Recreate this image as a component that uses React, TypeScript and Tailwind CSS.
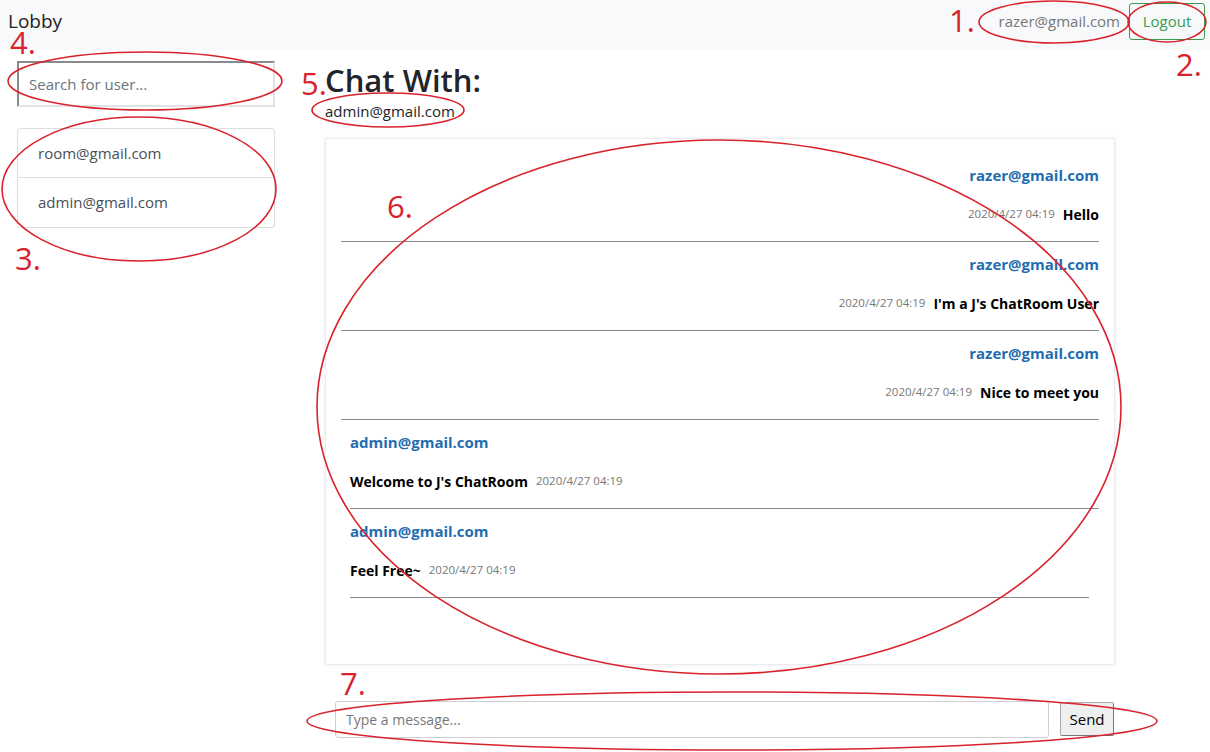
import React from "react";

type Message = {
  id: number;
  from: string;
  text: string;
  time: string;
  mine: boolean;
};

const messages: Message[] = [
  { id: 1, from: "razer@gmail.com", text: "Hello", time: "2020/4/27 04:19", mine: true },
  { id: 2, from: "razer@gmail.com", text: "I'm a J's ChatRoom User", time: "2020/4/27 04:19", mine: true },
  { id: 3, from: "razer@gmail.com", text: "Nice to meet you", time: "2020/4/27 04:19", mine: true },
  { id: 4, from: "admin@gmail.com", text: "Welcome to J's ChatRoom", time: "2020/4/27 04:19", mine: false },
  { id: 5, from: "admin@gmail.com", text: "Feel Free~", time: "2020/4/27 04:19", mine: false },
];

const users = ["room@gmail.com", "admin@gmail.com"];

// red pen marks drawn over the screenshot
const Annotations = () => {
  const red = "#d9222b";
  const marks = [
    { n: "1.", x: 949, y: 32 },
    { n: "2.", x: 1176, y: 76 },
    { n: "3.", x: 15, y: 270 },
    { n: "4.", x: 10, y: 54 },
    { n: "5.", x: 301, y: 95 },
    { n: "6.", x: 387, y: 218 },
    { n: "7.", x: 340, y: 695 },
  ];
  const rings = [
    { cx: 1054, cy: 22, rx: 75, ry: 21 },
    { cx: 1167, cy: 22, rx: 39, ry: 20 },
    { cx: 145, cy: 81, rx: 137, ry: 29 },
    { cx: 388, cy: 110, rx: 76, ry: 17 },
    { cx: 139, cy: 189, rx: 137, ry: 72 },
    { cx: 719, cy: 407, rx: 402, ry: 267 },
    { cx: 732, cy: 721, rx: 425, ry: 29 },
  ];
  return (
    <svg
      className="pointer-events-none absolute left-0 top-0"
      width={1210}
      height={752}
      viewBox="0 0 1210 752"
    >
      {rings.map((r, i) => (
        <ellipse key={i} {...r} fill="none" stroke={red} strokeWidth={1.6} />
      ))}
      {marks.map((m) => (
        <text
          key={m.n}
          x={m.x}
          y={m.y}
          fill={red}
          fontSize={31}
          fontFamily="'Open Sans', sans-serif"
        >
          {m.n}
        </text>
      ))}
    </svg>
  );
};

const MessageRow = ({ msg, last }: { msg: Message; last: boolean }) => {
  if (msg.mine) {
    return (
      <div className="pt-[10px]">
        <div className="flex h-[24px] items-center justify-end text-[15px] font-bold text-[#1f6db0]">
          {msg.from}
        </div>
        <div className="mt-[15px] flex h-[24px] items-center justify-end gap-[8px]">
          <span className="text-[11.5px] text-[#777]">{msg.time}</span>
          <span className="text-[14px] font-bold text-black">{msg.text}</span>
        </div>
        <div className="mt-[15px] border-t border-[#8a8a8a]" />
      </div>
    );
  }
  return (
    <div className="pt-[10px] pl-[9px]">
      <div className="flex h-[24px] items-center text-[15px] font-bold text-[#1f6db0]">
        {msg.from}
      </div>
      <div className="mt-[15px] flex h-[24px] items-center gap-[8px]">
        <span className="text-[14px] font-bold text-black">{msg.text}</span>
        <span className="text-[11.5px] text-[#777]">{msg.time}</span>
      </div>
      <div
        className={
          last
            ? "mt-[15px] mr-[10px] border-t border-[#8a8a8a]"
            : "mt-[15px] border-t border-[#8a8a8a]"
        }
      />
    </div>
  );
};

export default function App() {
  return (
    <div className="relative h-[752px] w-[1210px] overflow-hidden bg-white font-['Open_Sans',sans-serif] text-[#212529]">
      <nav className="flex h-[50px] items-start justify-between bg-[#f8f9fa] pl-[8px] pr-[5px] pt-[3px]">
        <div className="flex h-[37px] items-center text-[19px] text-[#222]">Lobby</div>
        <div className="flex items-center gap-[9px]">
          <span className="text-[15px] text-[#777]">razer@gmail.com</span>
          <button
            type="button"
            className="h-[37px] w-[76px] rounded-[3px] border border-[#3a9a50] text-[15px] text-[#3a9a50]"
          >
            Logout
          </button>
        </div>
      </nav>

      <div className="flex">
        <aside className="w-[275px] shrink-0 pl-[17px] pt-[11px]">
          <input
            type="text"
            placeholder="Search for user..."
            className="h-[46px] w-[258px] border-2 border-t-[#8a8a8a] border-l-[#8a8a8a] border-r-[#e3e3e3] border-b-[#e3e3e3] px-[10px] text-[15px] placeholder:text-[#6c757d] outline-none"
          />
          <div className="mt-[21px] w-[258px]">
            {users.map((u, i) => (
              <div
                key={u}
                className={
                  i === 0
                    ? "flex h-[50px] items-center rounded-t-[4px] border border-[#dddddd] px-[20px] text-[15px] text-[#495057]"
                    : "flex h-[50px] items-center rounded-b-[4px] border border-t-0 border-[#dddddd] px-[20px] text-[15px] text-[#495057]"
                }
              >
                {u}
              </div>
            ))}
          </div>
        </aside>

        <main className="ml-[50px] pt-[11px]">
          <h2 className="h-[38px] text-[31px] leading-[38px] font-semibold text-[#212529]">
            Chat With:
          </h2>
          <div className="flex h-[24px] items-center text-[15px] text-[#212529]">
            admin@gmail.com
          </div>
          <div className="mt-[15px] h-[527px] w-[790px] border border-[#ececec] px-[15px] pt-[14px] shadow-[0_0_4px_rgba(0,0,0,0.08)]">
            {messages.map((m, i) => (
              <MessageRow key={m.id} msg={m} last={i === messages.length - 1} />
            ))}
          </div>
          <div className="mt-[36px] flex items-start pl-[10px]">
            <input
              type="text"
              placeholder="Type a message..."
              className="h-[37px] w-[714px] rounded-[3px] border border-[#cfcfcf] px-[10px] text-[14px] placeholder:text-[#777] outline-none"
            />
            <button
              type="button"
              className="ml-[11px] mt-[1px] h-[34px] w-[54px] rounded-[2px] border border-[#adadad] border-b-[#777] border-r-[#777] bg-[#efefef] text-[15px] text-black"
            >
              Send
            </button>
          </div>
        </main>
      </div>

      <Annotations />
    </div>
  );
}
